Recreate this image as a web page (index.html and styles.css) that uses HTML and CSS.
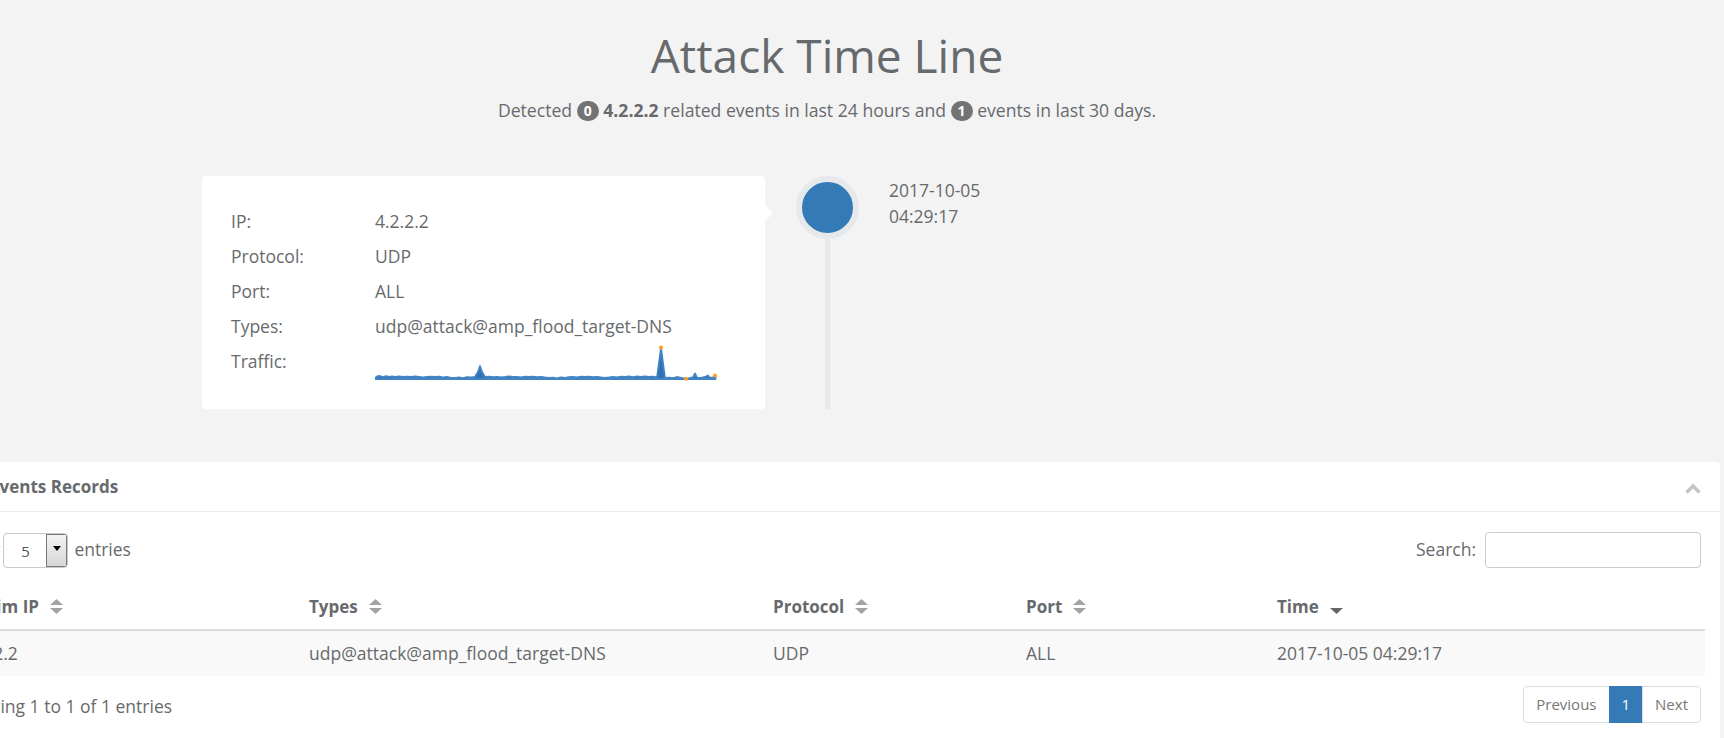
FILE: index.html
```html
<!DOCTYPE html>
<html lang="en">
<head>
<meta charset="utf-8">
<title>Attack Time Line</title>
<link rel="stylesheet" href="styles.css">
</head>
<body>
<div class="page">
  <header class="hero">
    <h1 class="title">Attack Time Line</h1>
    <p class="subtitle">Detected <span class="badge">0</span> <b>4.2.2.2</b> related events in last 24 hours and <span class="badge">1</span> events in last 30 days.</p>
  </header>

  <section class="timeline">
    <div class="tl-left">
      <div class="card">
        <div class="row"><span class="lbl">IP:</span><span class="val">4.2.2.2</span></div>
        <div class="row"><span class="lbl">Protocol:</span><span class="val">UDP</span></div>
        <div class="row"><span class="lbl">Port:</span><span class="val">ALL</span></div>
        <div class="row"><span class="lbl">Types:</span><span class="val">udp@attack@amp_flood_target-DNS</span></div>
        <div class="row"><span class="lbl">Traffic:</span>
          <svg class="spark" width="342" height="36" viewBox="0 0 342 36">
            <path d="M0,33 L2,31.5 L5,31 L8,32 L11,31.2 L14,31.8 L17,31.3 L20,31.8 L24,31.5 L28,32 L32,31.6 L36,31.8 L40,31.5 L44,32 L48,32.5 L52,31.8 L56,31.6 L60,32 L64,31.7 L68,32.3 L72,31.8 L76,32.8 L80,33 L84,32.4 L88,33.2 L92,32.2 L96,32.5 L100,31.8 L103,27 L105,21 L107,27 L110,32 L114,31.6 L118,32.2 L122,31.8 L126,32.4 L130,32 L134,31.5 L138,32 L142,31.8 L146,32.3 L150,31.6 L154,32 L158,31.7 L162,32.2 L166,31.8 L170,32.5 L174,33 L178,32.6 L182,33.3 L186,32.4 L190,33 L194,32.2 L198,31.8 L202,32.3 L206,31.7 L210,32 L214,31.6 L218,32.2 L222,31.8 L226,32.5 L230,32.8 L234,32.4 L238,31.8 L242,32.3 L246,31.6 L250,32 L254,31.5 L258,32.2 L262,31.4 L266,32 L270,31.3 L274,32 L278,31.6 L282,32.5 L284,18 L286,2.5 L288,18 L290,33 L294,32.6 L298,33.2 L302,32 L306,32.8 L311,34 L315,33 L318,32.5 L320,28.5 L322,32.6 L326,32.8 L330,32 L333,30.5 L335,32.8 L338,32.4 L340.5,30.5 L340.5,34 L0,34 Z" fill="#2f72b4" stroke="#4384c4" stroke-width="1.8" stroke-linejoin="round"/>
            <circle cx="286" cy="2.5" r="2" fill="#ff9f1a"/>
            <circle cx="311" cy="33.8" r="2" fill="#ff9f1a"/>
            <circle cx="340" cy="30.5" r="2" fill="#ff9f1a"/>
          </svg>
        </div>
      </div>
    </div>
    <div class="tl-center">
      <div class="dot"></div>
      <div class="line"></div>
    </div>
    <div class="tl-right">
      <div class="date">2017-10-05<br>04:29:17</div>
    </div>
  </section>

  <section class="ibox">
    <div class="ibox-title">
      <h5>Events Records</h5>
      <a class="collapse-link" href="#">
        <svg width="16" height="11" viewBox="0 0 16 11"><polyline points="1.5,9.5 8,3 14.5,9.5" fill="none" stroke="#c4c4c4" stroke-width="3.4"/></svg>
      </a>
    </div>
    <div class="ibox-content">
      <div class="dt-top">
        <div class="dt-length">
          <span>Show</span>
          <span class="select"><span class="sel-val">5</span><span class="sel-btn"><span class="tri"></span></span></span>
          <span>entries</span>
        </div>
        <div class="dt-filter">
          <span>Search:</span>
          <input class="search" type="search" aria-label="Search">
        </div>
      </div>

      <table class="dt">
        <colgroup>
          <col class="c1"><col class="c2"><col class="c3"><col class="c4"><col class="c5">
        </colgroup>
        <thead>
          <tr>
            <th>Victim IP<svg class="sort" width="13" height="15" viewBox="0 0 13 15"><polygon points="0,6 6.5,0 13,6" fill="#a3a3a3"/><polygon points="0,9 6.5,15 13,9" fill="#a3a3a3"/></svg></th>
            <th>Types<svg class="sort" width="13" height="15" viewBox="0 0 13 15"><polygon points="0,6 6.5,0 13,6" fill="#a3a3a3"/><polygon points="0,9 6.5,15 13,9" fill="#a3a3a3"/></svg></th>
            <th>Protocol<svg class="sort" width="13" height="15" viewBox="0 0 13 15"><polygon points="0,6 6.5,0 13,6" fill="#a3a3a3"/><polygon points="0,9 6.5,15 13,9" fill="#a3a3a3"/></svg></th>
            <th>Port<svg class="sort" width="13" height="15" viewBox="0 0 13 15"><polygon points="0,6 6.5,0 13,6" fill="#a3a3a3"/><polygon points="0,9 6.5,15 13,9" fill="#a3a3a3"/></svg></th>
            <th>Time<svg class="sort sort-desc" width="13" height="15" viewBox="0 0 13 15"><polygon points="0,9 6.5,15 13,9" fill="#666"/></svg></th>
          </tr>
        </thead>
        <tbody>
          <tr>
            <td>4.2.2.2</td>
            <td>udp@attack@amp_flood_target-DNS</td>
            <td>UDP</td>
            <td>ALL</td>
            <td>2017-10-05 04:29:17</td>
          </tr>
        </tbody>
      </table>

      <div class="dt-bottom">
        <div class="info">Showing 1 to 1 of 1 entries</div>
        <ul class="pagination">
          <li class="disabled"><a href="#">Previous</a></li>
          <li class="active"><a href="#">1</a></li>
          <li class="disabled"><a href="#">Next</a></li>
        </ul>
      </div>
    </div>
  </section>
</div>
</body>
</html>
```

FILE: styles.css
```css
html, body {
  margin: 0;
  padding: 0;
}
body {
  background: #f3f3f4;
  color: #676a6c;
  font-family: "Open Sans", "Liberation Sans", sans-serif;
  font-size: 17.5px;
  overflow: hidden;
}
.page {
  margin-left: -66px;
  width: 1786px;
  padding-top: 28px;
}

/* hero */
.hero { text-align: center; }
.title {
  margin: 0;
  font-size: 46px;
  line-height: 54px;
  font-weight: 400;
  color: #676a6c;
}
.subtitle {
  margin: 16px 0 0;
  line-height: 24px;
  font-size: 17.6px;
}
.subtitle b { font-weight: 700; }
.badge {
  display: inline-block;
  min-width: 8px;
  text-align: center;
  background: #737373;
  color: #fff;
  font-size: 14px;
  font-weight: 700;
  line-height: 14px;
  padding: 3px 7px;
  border-radius: 10px;
  vertical-align: middle;
  position: relative;
  top: -1px;
}

/* timeline */
.timeline {
  margin-top: 54px;
  display: grid;
  grid-template-columns: 1fr 124px 1fr;
}
.tl-left {
  display: flex;
  justify-content: flex-end;
}
.card {
  position: relative;
  width: 563px;
  box-sizing: border-box;
  background: #fff;
  border-radius: 4px;
  padding: 28px 0 30px 29px;
}
.card::after {
  content: "";
  position: absolute;
  right: -8px;
  top: 29px;
  border-left: 8px solid #fff;
  border-top: 8px solid transparent;
  border-bottom: 8px solid transparent;
}
.row {
  display: flex;
  align-items: flex-start;
  height: 35px;
  line-height: 35px;
}
.lbl { width: 144px; flex: none; }
.spark { display: block; margin-top: 1px; }

.tl-center {
  display: flex;
  flex-direction: column;
  align-items: center;
}
.dot {
  width: 51px;
  height: 51px;
  border-radius: 50%;
  background: #337ab7;
  border: 6px solid #e6e9ec;
  flex: none;
}
.line {
  width: 5px;
  flex: 1;
  background: #e6e9ec;
}
.date {
  padding-top: 1px;
  line-height: 26px;
}

/* ibox panel */
.ibox {
  margin: 53px 0 0 7px;
  background: #fff;
  border-radius: 4px;
  min-height: 300px;
}
.ibox-title {
  display: flex;
  justify-content: space-between;
  align-items: center;
  height: 49px;
  padding: 0 19px 0 49px;
  border-bottom: 1px solid #e7eaec;
}
.ibox-title h5 {
  margin: 0;
  font-size: 17px;
  font-weight: 700;
  line-height: 24px;
}
.collapse-link {
  display: block;
  margin-top: 4px;
  line-height: 0;
}
.ibox-content {
  padding: 20px 15px 0;
}
.dt-top {
  display: flex;
  justify-content: space-between;
  align-items: center;
  height: 36px;
  margin-right: 4px;
}
.dt-length, .dt-filter {
  display: flex;
  align-items: center;
  line-height: 24px;
}
.dt-length > span:not(.select), .dt-filter > span {
  position: relative;
  top: -1px;
}
.select {
  display: flex;
  box-sizing: border-box;
  width: 65px;
  height: 35px;
  margin: 0 6px 0 3px;
  border: 1px solid #c9c9c9;
  border-radius: 4px;
  overflow: hidden;
}
.sel-val {
  flex: 1;
  text-align: center;
  font-size: 15px;
  line-height: 35px;
  color: #555;
}
.sel-btn {
  width: 21px;
  flex: none;
  box-sizing: border-box;
  border: 1px solid #7a7a7a;
  background: linear-gradient(#f3f3f3, #d6d6d6);
  display: flex;
  align-items: center;
  justify-content: center;
}
.tri {
  width: 0;
  height: 0;
  border-left: 4px solid transparent;
  border-right: 4px solid transparent;
  border-top: 5px solid #000;
  margin-top: -4px;
}
.search {
  box-sizing: border-box;
  width: 216px;
  height: 36px;
  margin: 0 0 0 9px;
  border: 1px solid #cccccc;
  border-radius: 4px;
  background: #fff;
  font: inherit;
}

/* table */
.dt {
  width: 100%;
  margin-top: 16px;
  border-collapse: collapse;
  table-layout: fixed;
}
.c1 { width: 345px; }
.c2 { width: 464px; }
.c3 { width: 253px; }
.c4 { width: 251px; }
.c5 { width: 436px; }
.dt th {
  text-align: left;
  padding: 8px;
  font-size: 17px;
  font-weight: 700;
  line-height: 29px;
  border-bottom: 2px solid #dddddd;
  white-space: nowrap;
}
.dt td {
  padding: 8px;
  line-height: 29px;
  background: #f9f9f9;
  white-space: nowrap;
}
.sort {
  margin-left: 11px;
  vertical-align: -1px;
}

.dt-bottom {
  display: flex;
  justify-content: space-between;
  align-items: flex-start;
  margin-right: 4px;
}
.info {
  padding-top: 18px;
  line-height: 24px;
}
.pagination {
  display: flex;
  list-style: none;
  margin: 10px 0 0;
  padding: 0;
}
.pagination a {
  display: block;
  padding: 0 12px;
  line-height: 35px;
  font-size: 15px;
  color: #777;
  text-decoration: none;
  border: 1px solid #dddddd;
  margin-left: -1px;
  background: #fff;
}
.pagination li:first-child a {
  margin-left: 0;
  border-radius: 4px 0 0 4px;
}
.pagination li:last-child a {
  border-radius: 0 4px 4px 0;
}
.pagination .active a {
  background: #337ab7;
  border-color: #337ab7;
  color: #fff;
}
```
